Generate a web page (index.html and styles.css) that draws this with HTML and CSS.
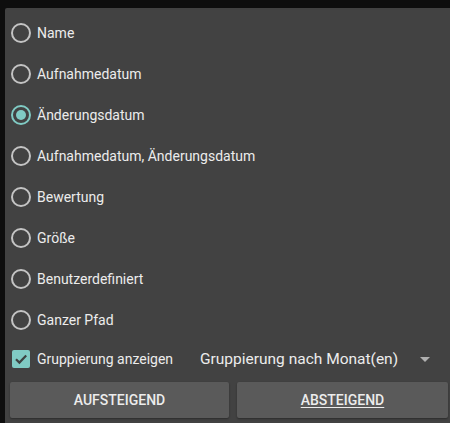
FILE: index.html
```html
<!DOCTYPE html>
<html>
<head>
<meta charset="utf-8">
<link rel="stylesheet" href="styles.css">
</head>
<body>
<div class="panel">
  <div class="options">
    <div class="row"><span class="radio"></span><span class="label">Name</span></div>
    <div class="row"><span class="radio"></span><span class="label">Aufnahmedatum</span></div>
    <div class="row"><span class="radio checked"></span><span class="label">Änderungsdatum</span></div>
    <div class="row"><span class="radio"></span><span class="label">Aufnahmedatum, Änderungsdatum</span></div>
    <div class="row"><span class="radio"></span><span class="label">Bewertung</span></div>
    <div class="row"><span class="radio"></span><span class="label">Größe</span></div>
    <div class="row"><span class="radio"></span><span class="label">Benutzerdefiniert</span></div>
    <div class="row"><span class="radio"></span><span class="label">Ganzer Pfad</span></div>
  </div>
  <div class="group-row">
    <div class="check-wrap">
      <span class="checkbox">
        <svg width="18" height="18" viewBox="0 0 18 18"><path d="M4 9.2 L7.4 12.6 L14.2 5.6" fill="none" stroke="#3d4342" stroke-width="2.2"/></svg>
      </span>
      <span class="label">Gruppierung anzeigen</span>
    </div>
    <div class="spinner">
      <span class="spinner-text">Gruppierung nach Monat(en)</span>
      <span class="arrow"></span>
    </div>
  </div>
  <div class="buttons">
    <div class="btn btn-left">AUFSTEIGEND</div>
    <div class="btn btn-right"><span class="u">ABSTEIGEND</span></div>
  </div>
</div>
</body>
</html>
```
FILE: styles.css
```css
html, body {
  margin: 0;
  padding: 0;
  background: #0e0e0e;
  width: 450px;
  height: 423px;
  overflow: hidden;
  font-family: Roboto, "Noto Sans", sans-serif;
}
.panel {
  margin: 8px 0 0 5px;
  height: 415px;
  width: 460px;
  background: #424242;
  border-radius: 2px 0 0 0;
  box-sizing: border-box;
  padding-top: 4px;
}
.options {
  display: flex;
  flex-direction: column;
}
.row {
  height: 41px;
  display: flex;
  align-items: center;
  padding-left: 6px;
}
.radio {
  width: 20px;
  height: 20px;
  box-sizing: border-box;
  border: 2px solid #c4c4c4;
  border-radius: 50%;
  margin-right: 6px;
  position: relative;
  flex: none;
}
.radio.checked {
  border-color: #80cbc4;
}
.radio.checked::after {
  content: "";
  position: absolute;
  left: 3px;
  top: 3px;
  width: 10px;
  height: 10px;
  border-radius: 50%;
  background: #80cbc4;
}
.label {
  color: #ececec;
  font-size: 14px;
}
.group-row {
  height: 38px;
  display: flex;
  align-items: center;
}
.check-wrap {
  display: flex;
  align-items: center;
  padding-left: 7px;
  width: 188px;
}
.checkbox {
  width: 18px;
  height: 18px;
  background: #80cbc4;
  border-radius: 2px;
  margin-right: 7px;
  display: flex;
  flex: none;
}
.spinner {
  display: flex;
  align-items: center;
  width: 240px;
}
.spinner-text {
  color: #ececec;
  font-size: 15.5px;
  flex: 1;
}
.arrow {
  width: 0;
  height: 0;
  border-left: 5px solid transparent;
  border-right: 5px solid transparent;
  border-top: 5px solid #b0b0b0;
  margin-right: 10px;
}
.buttons {
  display: flex;
  gap: 8px;
  padding-left: 5px;
  margin-top: 4px;
}
.btn {
  height: 36px;
  background: #5a5a5a;
  border-radius: 2px;
  color: #ececec;
  font-size: 14px;
  font-weight: 500;
  display: flex;
  align-items: center;
  justify-content: center;
  box-shadow: 0 1px 2px rgba(0,0,0,0.35);
}
.btn-left { width: 219px; }
.btn-right { width: 211px; }
.u { text-decoration: underline; text-underline-offset: 2px; }
```
